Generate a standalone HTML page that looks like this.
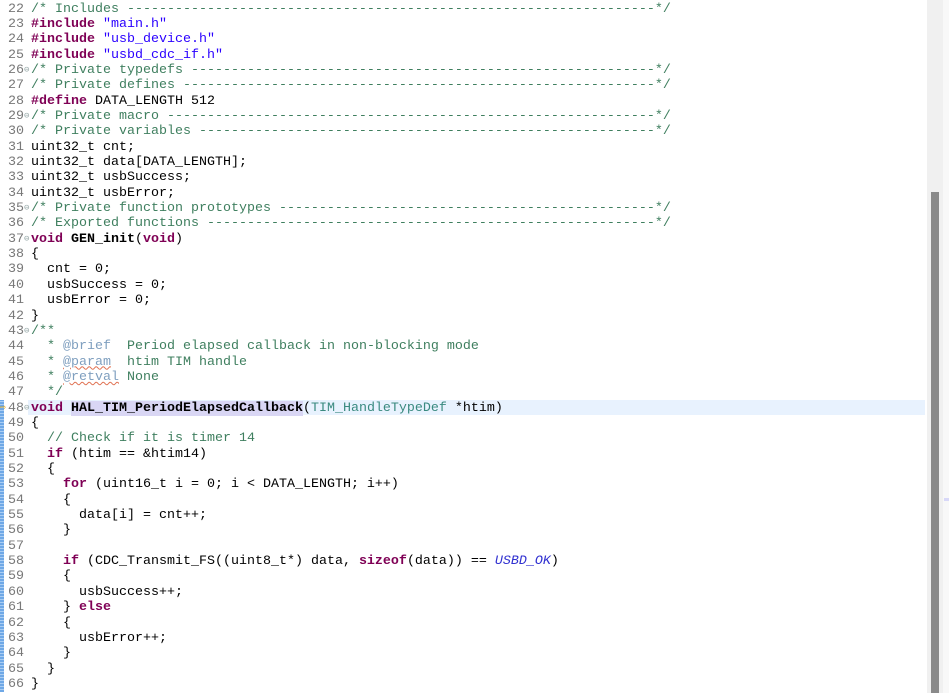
<!DOCTYPE html>
<html><head><meta charset="utf-8"><style>
html,body{margin:0;padding:0;width:949px;height:693px;overflow:hidden;background:#fff}
.ed{position:relative;width:949px;height:693px;font-family:"Liberation Mono",monospace;font-size:13.33px;color:#000}
.l{position:absolute;left:0;height:15.35px;line-height:15.35px;white-space:pre;width:925px;margin-top:1.5px}
.n{position:absolute;left:8px;color:#787878}
.f{position:absolute;left:24px;color:#9aa;font-size:9px}
.c{position:absolute;left:31px}
.cm{color:#3f7f5f}
.k{color:#7f0055;font-weight:bold}
.s{color:#2a00ff}
.b{font-weight:bold}
.t{color:#3a8a80}
.m{color:#3030d0;font-style:italic}
.tag{color:#7f9fbf}
.sq{text-decoration:underline wavy #e07050;text-decoration-thickness:1px}
.sel{background:#d9d6f4}
</style></head><body><div class="ed">
<div style="position:absolute;left:28px;top:400px;width:897px;height:15.35px;background:#e8f2fe"></div>
<div style="position:absolute;left:0;top:400px;width:4px;height:292px;background:repeating-linear-gradient(0deg,#6fa8e6 0 2px,#a9cdf3 2px 3px)"></div>
<div style="position:absolute;left:927px;top:0;width:16px;height:693px;background:#f0f0f0"></div>
<div style="position:absolute;left:931px;top:192px;width:8px;height:501px;background:#8a8a8a"></div>
<div style="position:absolute;left:943px;top:0;width:6px;height:693px;background:#f8f8f8"></div>
<div style="position:absolute;left:944px;top:498px;width:5px;height:3px;background:#d8d8f8"></div>
<div style="position:absolute;left:0;top:402px;color:#e0a000;font-size:10px">⇨</div>

<div class="l" style="top:0px"><span class="n">22</span><span class="c cm">/* Includes ------------------------------------------------------------------*/</span></div>
<div class="l" style="top:15.35px"><span class="n">23</span><span class="c"><span class="k">#include</span> <span class="s">"main.h"</span></span></div>
<div class="l" style="top:30.7px"><span class="n">24</span><span class="c"><span class="k">#include</span> <span class="s">"usb_device.h"</span></span></div>
<div class="l" style="top:46.05px"><span class="n">25</span><span class="c"><span class="k">#include</span> <span class="s">"usbd_cdc_if.h"</span></span></div>
<div class="l" style="top:61.4px"><span class="n">26</span><span class="f">⊖</span><span class="c cm">/* Private typedefs ----------------------------------------------------------*/</span></div>
<div class="l" style="top:76.75px"><span class="n">27</span><span class="c cm">/* Private defines -----------------------------------------------------------*/</span></div>
<div class="l" style="top:92.1px"><span class="n">28</span><span class="c"><span class="k">#define</span> DATA_LENGTH 512</span></div>
<div class="l" style="top:107.45px"><span class="n">29</span><span class="f">⊖</span><span class="c cm">/* Private macro -------------------------------------------------------------*/</span></div>
<div class="l" style="top:122.8px"><span class="n">30</span><span class="c cm">/* Private variables ---------------------------------------------------------*/</span></div>
<div class="l" style="top:138.15px"><span class="n">31</span><span class="c">uint32_t cnt;</span></div>
<div class="l" style="top:153.5px"><span class="n">32</span><span class="c">uint32_t data[DATA_LENGTH];</span></div>
<div class="l" style="top:168.85px"><span class="n">33</span><span class="c">uint32_t usbSuccess;</span></div>
<div class="l" style="top:184.2px"><span class="n">34</span><span class="c">uint32_t usbError;</span></div>
<div class="l" style="top:199.55px"><span class="n">35</span><span class="f">⊖</span><span class="c cm">/* Private function prototypes -----------------------------------------------*/</span></div>
<div class="l" style="top:214.9px"><span class="n">36</span><span class="c cm">/* Exported functions --------------------------------------------------------*/</span></div>
<div class="l" style="top:230.25px"><span class="n">37</span><span class="f">⊖</span><span class="c"><span class="k">void</span> <span class="b">GEN_init</span>(<span class="k">void</span>)</span></div>
<div class="l" style="top:245.6px"><span class="n">38</span><span class="c">{</span></div>
<div class="l" style="top:260.95px"><span class="n">39</span><span class="c">  cnt = 0;</span></div>
<div class="l" style="top:276.3px"><span class="n">40</span><span class="c">  usbSuccess = 0;</span></div>
<div class="l" style="top:291.65px"><span class="n">41</span><span class="c">  usbError = 0;</span></div>
<div class="l" style="top:307px"><span class="n">42</span><span class="c">}</span></div>
<div class="l" style="top:322.35px"><span class="n">43</span><span class="f">⊖</span><span class="c cm">/**</span></div>
<div class="l" style="top:337.7px"><span class="n">44</span><span class="c cm">  * <span class="tag">@brief</span>  Period elapsed callback in non-blocking mode</span></div>
<div class="l" style="top:353.05px"><span class="n">45</span><span class="c cm">  * <span class="tag sq">@param</span>  htim TIM handle</span></div>
<div class="l" style="top:368.4px"><span class="n">46</span><span class="c cm">  * <span class="tag sq">@retval</span> None</span></div>
<div class="l" style="top:383.75px"><span class="n">47</span><span class="c cm">  */</span></div>
<div class="l" style="top:399.1px"><span class="n">48</span><span class="f">⊖</span><span class="c"><span class="k">void</span> <span class="b sel">HAL_TIM_PeriodElapsedCallback</span>(<span class="t">TIM_HandleTypeDef</span> *htim)</span></div>
<div class="l" style="top:414.45px"><span class="n">49</span><span class="c">{</span></div>
<div class="l" style="top:429.8px"><span class="n">50</span><span class="c">  <span class="cm">// Check if it is timer 14</span></span></div>
<div class="l" style="top:445.15px"><span class="n">51</span><span class="c">  <span class="k">if</span> (htim == &amp;htim14)</span></div>
<div class="l" style="top:460.5px"><span class="n">52</span><span class="c">  {</span></div>
<div class="l" style="top:475.85px"><span class="n">53</span><span class="c">    <span class="k">for</span> (uint16_t i = 0; i &lt; DATA_LENGTH; i++)</span></div>
<div class="l" style="top:491.2px"><span class="n">54</span><span class="c">    {</span></div>
<div class="l" style="top:506.55px"><span class="n">55</span><span class="c">      data[i] = cnt++;</span></div>
<div class="l" style="top:521.9px"><span class="n">56</span><span class="c">    }</span></div>
<div class="l" style="top:537.25px"><span class="n">57</span><span class="c"></span></div>
<div class="l" style="top:552.6px"><span class="n">58</span><span class="c">    <span class="k">if</span> (CDC_Transmit_FS((uint8_t*) data, <span class="k">sizeof</span>(data)) == <span class="m">USBD_OK</span>)</span></div>
<div class="l" style="top:567.95px"><span class="n">59</span><span class="c">    {</span></div>
<div class="l" style="top:583.3px"><span class="n">60</span><span class="c">      usbSuccess++;</span></div>
<div class="l" style="top:598.65px"><span class="n">61</span><span class="c">    } <span class="k">else</span></span></div>
<div class="l" style="top:614px"><span class="n">62</span><span class="c">    {</span></div>
<div class="l" style="top:629.35px"><span class="n">63</span><span class="c">      usbError++;</span></div>
<div class="l" style="top:644.7px"><span class="n">64</span><span class="c">    }</span></div>
<div class="l" style="top:660.05px"><span class="n">65</span><span class="c">  }</span></div>
<div class="l" style="top:675.4px"><span class="n">66</span><span class="c">}</span></div>
</div></body></html>
